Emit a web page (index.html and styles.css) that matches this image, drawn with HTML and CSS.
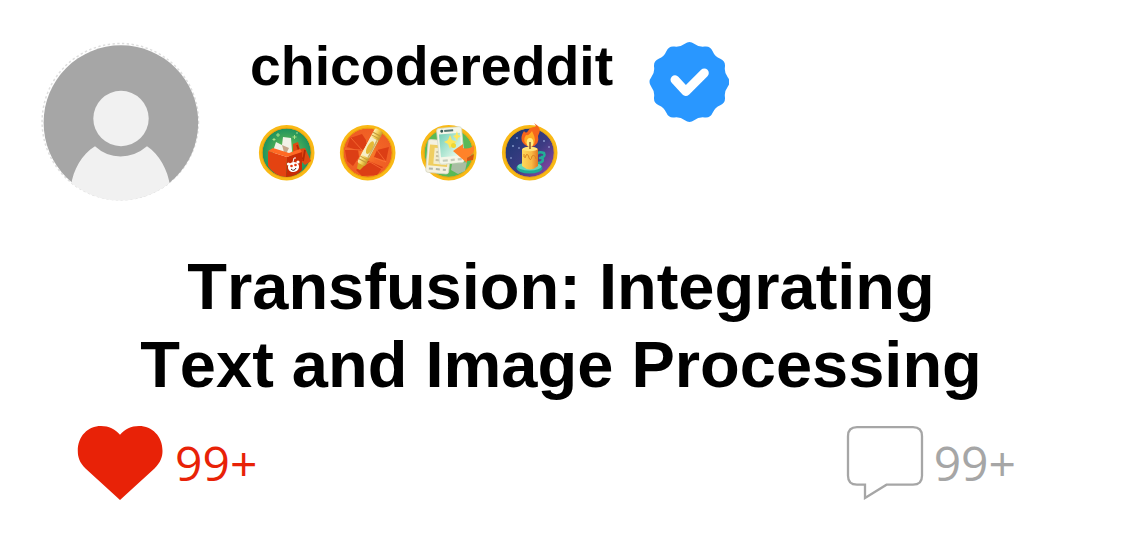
FILE: index.html
```html
<!DOCTYPE html>
<html lang="en">
<head>
<meta charset="utf-8">
<title>chicodereddit</title>
<link rel="stylesheet" href="styles.css">
</head>
<body>
<main class="card">
  <header class="header">
    <svg class="avatar" viewBox="0 0 160 160">
      <defs><clipPath id="face"><circle cx="79.500" cy="80.500" r="78"/></clipPath></defs>
      <circle cx="79.300" cy="79.700" r="78.200" fill="#fff" stroke="#dedede" stroke-width="1.500" stroke-dasharray="2.400 2.400"/>
      <circle cx="79.900" cy="80.600" r="77.300" fill="#a6a6a6"/>
      <g clip-path="url(#face)">
        <path d="M30 160V144C32 128 41 112 54 104.300Q65 114.500 79.500 114.500T106 104.300C118 112 127 128 129 144V160Z" fill="#f1f1f1"/>
      </g>
      <circle cx="80" cy="76.500" r="27.700" fill="#f1f1f1"/>
    </svg>
    <div class="identity">
      <div class="name-row">
        <h2 class="name">chicodereddit</h2>
        <svg class="verified" viewBox="-40.500 -40 80 80">
          <path fill="#2997ff" d="M38.220-4.640Q41.780 0 38.220 4.640Q34.660 9.290 35.420 15.090Q36.180 20.890 30.780 23.130Q25.370 25.370 23.130 30.780Q20.890 36.180 15.090 35.420Q9.290 34.660 4.640 38.220Q0 41.780-4.640 38.220Q-9.290 34.660-15.090 35.420Q-20.890 36.180-23.130 30.780Q-25.370 25.370-30.780 23.130Q-36.180 20.890-35.420 15.090Q-34.660 9.290-38.220 4.640Q-41.780 0-38.220-4.640Q-34.660-9.290-35.420-15.090Q-36.180-20.890-30.780-23.130Q-25.370-25.370-23.130-30.780Q-20.890-36.180-15.090-35.420Q-9.290-34.660-4.640-38.220Q0-41.780 4.640-38.220Q9.290-34.660 15.090-35.420Q20.890-36.180 23.130-30.780Q25.370-25.370 30.780-23.130Q36.180-20.890 35.420-15.090Q34.660-9.290 38.220-4.640Z"/>
          <path d="M-14.500-2.200-3.700 9.500 14.800-9" fill="none" stroke="#fff" stroke-width="9" stroke-linecap="round" stroke-linejoin="round"/>
        </svg>
      </div>
      <div class="awards">
        <svg class="award" viewBox="0 0 66 66">
          <defs><radialGradient id="green"><stop offset="0" stop-color="#7fc94c"/><stop offset="1" stop-color="#178f60"/></radialGradient></defs>
          <circle cx="32.700" cy="32.700" r="26" fill="url(#green)" stroke="#f9b916" stroke-width="3.600"/>
          <circle cx="32.700" cy="32.700" r="24.600" fill="none" stroke="#e99a0b" stroke-width=".8"/>
          <path d="M39 24 44 22 46 29 51 28 57 41 51 45 47 41 45 49 39 41Z" fill="#e04a12"/>
          <path d="M43 25 48 39M51 30 49 41" stroke="#b32b06" stroke-width="1.800"/>
          <path d="M19 31 22 22 28 25 29 17 37 18 38 31 35 39 20 35Z" fill="#f1f2e8"/>
          <path d="M28 25 31 36 35 28Z" fill="#c5a689"/>
          <path d="M14 31 33 37 32 57Q20 56 14 46Z" fill="#e44311"/>
          <path d="M33 37 48 31 48 50Q42 57 32 57Z" fill="#c92c05"/>
          <path d="M14 31 19 28 35 33 46 29 48 32 33 37Z" fill="#ff6924"/>
          <ellipse cx="39.500" cy="47" rx="5.600" ry="5" fill="#fff" transform="rotate(-15 39.500 47)"/>
          <circle cx="34.500" cy="44" r="1.600" fill="#fff"/><circle cx="44" cy="42" r="1.600" fill="#fff"/>
          <path d="M39 42 40 38 42 38" fill="none" stroke="#fff"/>
          <circle cx="37.500" cy="46" r="1.300" fill="#e4350b"/><circle cx="41.500" cy="45" r="1.300" fill="#e4350b"/>
          <path d="M37 49Q40 52 42 48" fill="none" stroke="#43201a"/>
          <path d="M24 13V17M22 15H26M40.500 15V19M38.500 17H42.500M20 18V21M18.500 19.500H21.500M43 12V14" stroke="#b2e58a" stroke-width=".9"/>
        </svg>
        <svg class="award" viewBox="0 0 66 66">
          <defs>
            <radialGradient id="red"><stop offset="0" stop-color="#ff8b2d"/><stop offset=".45" stop-color="#f26426"/><stop offset="1" stop-color="#ee5d24"/></radialGradient>
            <linearGradient id="wax" x2="1"><stop stop-color="#fff0b5"/><stop offset=".5" stop-color="#f2ce55"/><stop offset="1" stop-color="#c49728"/></linearGradient>
          </defs>
          <circle cx="32.700" cy="32.700" r="26" fill="url(#red)" stroke="#f9b916" stroke-width="3.600"/>
          <path d="M15 18 27 14 31 20 32 27 26 31 12 27ZM10 30 23 29 24 37 18 46 12 41ZM42 30 54 27 51 41 39 37ZM31 40 48 47 42 55 27 56 21 50Z" fill="#dc3e15"/>
          <path d="M16 18 27 30 10 29M42 30 51 42 40 38M24 48 35 42 47 49" fill="none" stroke="#ff7b3b" opacity=".65"/>
          <circle cx="32.700" cy="32.700" r="24.600" fill="none" stroke="#eb9e0d"/>
          <g transform="translate(1.500 .5) rotate(28 33 28)">
            <path d="M29.300 45H36.700L34.700 51.500H31.300Z" fill="#dba421"/>
            <rect x="28.500" y="7" width="9" height="39" rx="2" fill="url(#wax)"/>
            <path d="M28.500 12H37.500M28.500 15H37.500M28.500 39H37.500M28.500 42H37.500" stroke="#c29a3c"/>
            <path d="M28.600 17H37V37H28.600Z" fill="#f7eec7"/>
            <ellipse cx="33" cy="27" rx="2.700" ry="7" fill="#e4b936"/>
            <path d="M36 17V37" stroke="#cfae64" stroke-width="1.500"/>
          </g>
        </svg>
        <svg class="award" viewBox="0 0 66 66">
          <defs><linearGradient id="screen" x2="1" y2="1"><stop stop-color="#74cfb6"/><stop offset="1" stop-color="#f1fff2"/></linearGradient></defs>
          <circle cx="32.700" cy="32.700" r="26" fill="#59b957" stroke="#f9b916" stroke-width="3.600"/>
          <circle cx="32.700" cy="32.700" r="24.600" fill="none" stroke="#e0aa18"/>
          <path d="M36 44 51 42 49 51 42 54 35 50Z" fill="#a9bda3"/>
          <g transform="rotate(5 20 36)">
            <rect x="11" y="20" width="23" height="33" rx="2.500" fill="#f4f1df" stroke="#d7d6c2" stroke-width=".8"/>
            <rect x="13" y="25" width="19" height="21" fill="#efce61"/>
            <path d="M18 28H31V44H18Z" fill="#f4edcb"/>
            <path d="M20 32H29M20 36H29M20 40H29" stroke="#c8c0a0" stroke-width="2"/>
            <path d="M14 49H18M21 49H25M28 49H31" stroke="#b1b6a8" stroke-width="2"/>
          </g>
          <g transform="translate(-.5 .5) rotate(-5 35 25)">
            <rect x="22.500" y="7" width="25" height="36" rx="2.500" fill="#f4f6e8" stroke="#d5dcca" stroke-width=".8"/>
            <rect x="24.500" y="13" width="21" height="23" fill="url(#screen)"/>
            <circle cx="27.500" cy="10" r="1.500" fill="#355b58"/>
            <path d="M30 10H39" stroke="#547670" stroke-width="2"/>
            <path d="M26 39.500H31M34 39.500H38M41 39.500H45" stroke="#c4cbbb" stroke-width="2.200"/>
          </g>
          <path d="M34 15 36 20 41 22 36 24 34 29 32 24 28 22 32 20ZM41 11 42 15 45 16 42 18 41 21 39.500 18 37 16 39.500 15Z" fill="#ffe75a"/>
          <circle cx="37.500" cy="25.500" r="2.500" fill="#f0d733"/>
          <path d="M37 31 47 24 47 28Q53 30 58 25Q60 34 51 38L51 43Z" fill="#ff8229"/>
          <path d="M51 38 58 34 57 40 51 41Z" fill="#d85512"/>
        </svg>
        <svg class="award" viewBox="0 0 66 66">
          <defs>
            <linearGradient id="night" x2="1" y2="1"><stop stop-color="#13386f"/><stop offset=".55" stop-color="#3d3b83"/><stop offset="1" stop-color="#a44bad"/></linearGradient>
            <linearGradient id="candle"><stop stop-color="#ffd95b"/><stop offset=".6" stop-color="#f9b943"/><stop offset="1" stop-color="#df7924"/></linearGradient>
          </defs>
          <circle cx="32.700" cy="32.700" r="26" fill="url(#night)" stroke="#f9b916" stroke-width="3.600"/>
          <circle cx="32.700" cy="32.700" r="24.600" fill="none" stroke="#e0a01a" stroke-width=".8"/>
          <g fill="#bfd6ff"><circle cx="20" cy="18" r=".8"/><circle cx="16" cy="26" r=".8"/><circle cx="22" cy="28" r=".7"/><circle cx="47" cy="21" r=".8"/><circle cx="52" cy="27" r=".7"/><circle cx="14" cy="38" r=".7"/></g>
          <ellipse cx="32.500" cy="48" rx="13" ry="5.500" fill="#1eaa94"/>
          <ellipse cx="32.500" cy="46.500" rx="12" ry="4" fill="#65d4ba"/>
          <path d="M40 34Q42 31 47 33Q49 37 43 38M40 43Q48 43 45 37" fill="none" stroke="#23ad97" stroke-width="2.600" stroke-linecap="round"/>
          <path d="M25 29Q33 24 41 29V46Q33 53 25 46Z" fill="url(#candle)"/>
          <ellipse cx="33" cy="29" rx="7.500" ry="2.200" fill="#ffe77b"/>
          <path d="M27 34V37Q29 39 29 35Q31 33 32 38Q34 42 35 36Q38 34 39 39" fill="none" stroke="#d9851f"/>
          <path d="M32 27Q20 22 27 11Q29 14 31 11Q33 7 38 7Q40 6 37 3Q46 8 41 16Q43 25 34 27Z" fill="#f5651c"/>
          <path d="M32 26Q24 22 29 15Q32 16 35 11Q41 22 35 26Z" fill="#ffac24"/>
          <ellipse cx="33" cy="22.500" rx="3.300" ry="4.500" fill="#ffed82"/>
          <path d="M33 22V29" stroke="#6d3618" stroke-width="1.200"/>
        </svg>
      </div>
    </div>
  </header>
  <h1 class="title">Transfusion: Integrating<br>Text and Image Processing</h1>
  <footer class="stats">
    <div class="stat likes">
      <svg class="heart" viewBox="0 0 86 75"><path d="M43 75 8.500 43.500C2.500 37.500 .8 32 .8 26C.8 11 11 1 24 1C32 1 38 4 43 9.800C48 4 54 1 62 1C75 1 85.500 11 85.500 26C85.500 32 83.500 37.500 77.500 43.500Z" fill="#e82207"/></svg>
      <span class="count">99+</span>
    </div>
    <div class="stat comments">
      <svg class="bubble" viewBox="0 0 78 75"><path d="M11 2.200H67Q76 2.200 76 11.200V50.700Q76 59.700 67 59.700H40.500L19 73V59.700H11Q2 59.700 2 50.700V11.200Q2 2.200 11 2.200Z" fill="none" stroke="#a6a6a6" stroke-width="2.300"/></svg>
      <span class="count">99+</span>
    </div>
  </footer>
</main>
</body>
</html>
```
FILE: styles.css
```css
body {
  margin: 0;
  background: #fff;
  font-family: "Liberation Sans", Arial, sans-serif;
}
.card {
  box-sizing: border-box;
  width: 1122px;
  height: 556px;
  padding: 42px 0 0;
  overflow: hidden;
}
svg { display: block; flex: none; }
.header {
  display: flex;
  height: 160px;
  padding-left: 41px;
}
.avatar { width: 160px; height: 160px; }
.identity { margin-left: 49px; }
.name-row { display: flex; height: 78px; }
.name {
  width: 399px;
  margin: -8px 0 0;
  color: #000;
  font-size: 55.400px;
  line-height: 64px;
  white-space: nowrap;
}
.verified { width: 80px; height: 80px; }
.awards {
  display: flex;
  gap: 15px;
  padding-left: 4px;
}
.award { width: 66px; height: 66px; }
.title {
  margin: 46px 0 0;
  color: #000;
  font-size: 65px;
  font-kerning: none;
  line-height: 78px;
  text-align: center;
}
.stats {
  display: flex;
  justify-content: space-between;
  margin-top: 21px;
  padding: 0 106px 0 77px;
}
.stat { display: flex; }
.likes { color: #e82207; }
.comments { color: #a6a6a6; }
.heart { width: 86px; height: 75px; }
.bubble { width: 78px; height: 75px; }
.count {
  margin: 5px 0 0 12px;
  font-family: "Open Sans", "Noto Sans", sans-serif;
  font-size: 48px;
  line-height: 66px;
}
.comments .count { margin-left: 10px; }
```
